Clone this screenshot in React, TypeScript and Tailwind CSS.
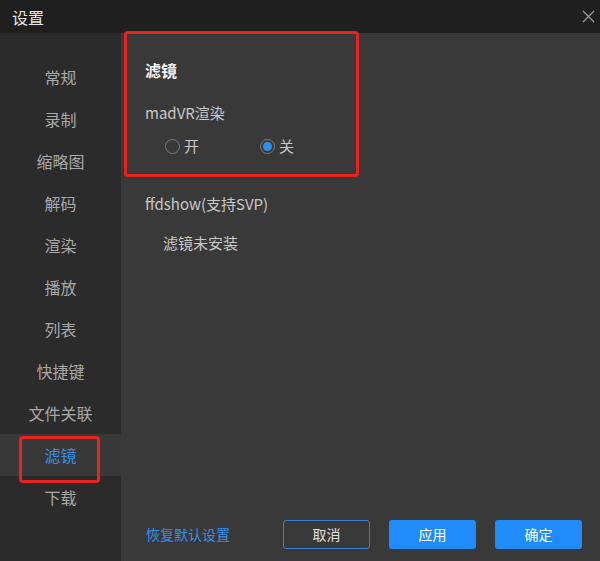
import { useState } from "react"

const menu = ["常规", "录制", "缩略图", "解码", "渲染", "播放", "列表", "快捷键", "文件关联", "滤镜", "下载"]

export default function App() {
  const [madvr, setMadvr] = useState(false)

  return (
    <div
      className="relative flex flex-col w-[600px] h-[561px] bg-[#393939] overflow-hidden"
      style={{ fontFamily: '"Noto Sans CJK SC", "Noto Sans", sans-serif' }}
    >
      {/* title bar */}
      <div className="flex items-center justify-between h-[33px] bg-[#1f1f1f] pl-3 pr-[5px] shrink-0">
        <span className="text-[16px] text-[#e6e6e6]">设置</span>
        <svg width="13" height="13" viewBox="0 0 13 13" className="text-[#9a9a9a]">
          <path d="M1 1L12 12M12 1L1 12" stroke="currentColor" strokeWidth="1.3" />
        </svg>
      </div>

      <div className="flex flex-1">
        {/* sidebar */}
        <div className="w-[121px] bg-[#2b2b2b] pt-[23px] flex flex-col shrink-0">
          {menu.map((m) => (
            <div
              key={m}
              className={
                "h-[42px] flex items-center justify-center text-[16px] " +
                (m === "滤镜" ? "bg-[#383838] text-[#3a8ee6]" : "text-[#a8a8a8]")
              }
            >
              {m}
            </div>
          ))}
        </div>

        {/* content */}
        <div className="flex-1 flex flex-col pl-6 pr-[18px] pb-3">
          <h2 className="mt-[25px] text-[16px] leading-6 font-bold text-[#f2f2f2]">滤镜</h2>
          <div className="mt-[21px] text-[15px] leading-5 text-[#c8c8c8]">madVR渲染</div>
          <div className="mt-[13px] flex items-center h-5 pl-[20px] text-[15px] text-[#c8c8c8]">
            <label className="flex items-center gap-[4px] w-[95px] cursor-pointer" onClick={() => setMadvr(true)}>
              <span className="w-[15px] h-[15px] rounded-full border border-[#7a7a7a] flex items-center justify-center">
                {madvr && <span className="w-[9px] h-[9px] rounded-full bg-[#2f8ff0]" />}
              </span>
              开
            </label>
            <label className="flex items-center gap-[4px] cursor-pointer" onClick={() => setMadvr(false)}>
              <span className="w-[15px] h-[15px] rounded-full border border-[#7a7a7a] flex items-center justify-center">
                {!madvr && <span className="w-[9px] h-[9px] rounded-full bg-[#2f8ff0]" />}
              </span>
              关
            </label>
          </div>
          <div className="mt-[38px] text-[15px] leading-5 text-[#c8c8c8]">ffdshow(支持SVP)</div>
          <div className="mt-[19px] pl-[18px] text-[15px] leading-5 text-[#c8c8c8]">滤镜未安装</div>

          <div className="mt-auto flex items-center">
            <span className="text-[14px] text-[#3a8ee6] pl-px">恢复默认设置</span>
            <div className="ml-auto flex gap-[19px]">
              <button className="w-[87px] h-[29px] rounded-[3px] border border-[#3a7fd0] text-[14px] text-[#e0e0e0]">取消</button>
              <button className="w-[87px] h-[29px] rounded-[3px] bg-[#1f8cfa] text-[14px] text-white">应用</button>
              <button className="w-[87px] h-[29px] rounded-[3px] bg-[#1f8cfa] text-[14px] text-white">确定</button>
            </div>
          </div>
        </div>
      </div>

      {/* annotation highlights */}
      <div className="absolute left-[124px] top-[31px] w-[235px] h-[146px] border-[3px] border-[#e8231f] rounded-[4px] pointer-events-none" />
      <div className="absolute left-[19px] top-[436px] w-[81px] h-[47px] border-[3px] border-[#e8231f] rounded-[4px] pointer-events-none" />
    </div>
  )
}
